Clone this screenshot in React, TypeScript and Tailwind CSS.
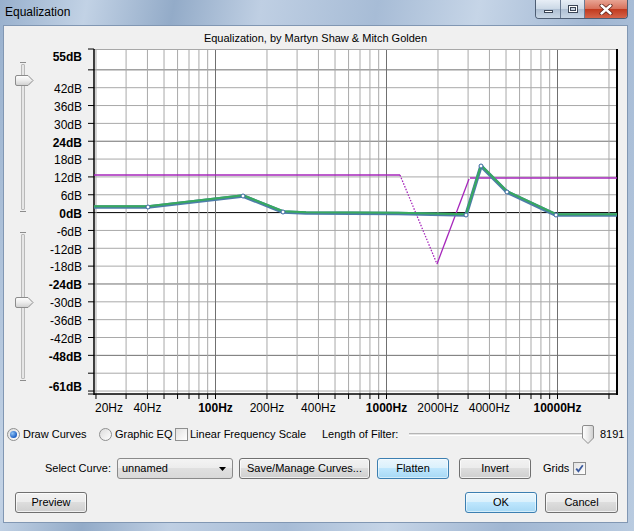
import React from 'react'

const xf = (f: number) => 215.5 + (Math.log10(f) - 2) * 171
const yd = (d: number) => 212.6 - d * 2.974

const freqs = [
  20, 30, 40, 50, 60, 70, 80, 90, 100, 200, 300, 400, 500, 600, 700, 800, 900, 1000, 2000, 3000, 4000, 5000,
  6000, 7000, 8000, 9000, 10000, 20000,
]
const majorF = [100, 1000, 10000]
const dbs = [48, 42, 36, 30, 24, 18, 12, 6, 0, -6, -12, -18, -24, -30, -36, -42, -48, -54, -60]
const majorDb = [48, 24, -24, -48]

const dbLabels = [
  { t: '55dB', y: 57, b: true },
  ...[42, 36, 30, 24, 18, 12, 6, 0, -6, -12, -18, -24, -30, -36, -42, -48].map((d) => ({
    t: `${d}dB`,
    y: yd(d) + 1,
    b: d % 24 === 0,
  })),
  { t: '-61dB', y: 387, b: true },
]

const hzLabels = [
  { t: '20Hz', x: 95, anchor: 'start', b: false },
  { t: '40Hz', x: xf(40), anchor: 'middle', b: false },
  { t: '100Hz', x: xf(100), anchor: 'middle', b: true },
  { t: '200Hz', x: xf(200), anchor: 'middle', b: false },
  { t: '400Hz', x: xf(400), anchor: 'middle', b: false },
  { t: '1000Hz', x: xf(1000), anchor: 'middle', b: true },
  { t: '2000Hz', x: xf(2000), anchor: 'middle', b: false },
  { t: '4000Hz', x: xf(4000), anchor: 'middle', b: false },
  { t: '10000Hz', x: xf(10000), anchor: 'middle', b: true },
]

const curve = [
  [94, 207],
  [148, 207],
  [243, 196],
  [283, 212],
  [306, 213],
  [398, 213.5],
  [466, 215],
  [481, 166],
  [507, 192],
  [556, 215],
  [617, 215],
]
const knots = [
  [148, 207],
  [243, 196],
  [283, 212],
  [466, 215],
  [481, 166],
  [507, 192],
  [556, 215],
]
const pts = curve.map((p) => p.join(',')).join(' ')
const ptsUp = curve.map((p) => `${p[0]},${p[1] - 0.8}`).join(' ')

function Chart() {
  return (
    <svg width={587} height={375} viewBox="40 45 587 375" className="block shrink-0">
      <rect x={94} y={49} width={523} height={345} fill="#ffffff" />
      {dbs.map((d) => (
        <line
          key={'h' + d}
          x1={94}
          x2={617}
          y1={yd(d)}
          y2={yd(d)}
          stroke={d === 0 ? '#000000' : majorDb.includes(d) ? '#707070' : '#a9a9a9'}
          strokeWidth={1}
        />
      ))}
      {freqs.map((f) => (
        <line
          key={'v' + f}
          x1={xf(f)}
          x2={xf(f)}
          y1={49}
          y2={394}
          stroke={majorF.includes(f) ? '#707070' : '#a9a9a9'}
          strokeWidth={1}
        />
      ))}
      <line x1={94} x2={617} y1={49.5} y2={49.5} stroke="#a8a8a8" />
      <line x1={94} x2={94} y1={49} y2={395} stroke="#000" strokeWidth={1.5} />
      <line x1={617} x2={617} y1={49} y2={395} stroke="#000" strokeWidth={2} />
      <line x1={94} x2={618} y1={394} y2={394} stroke="#000" strokeWidth={1.5} />

      {[55, ...dbs, -61].map((d) => (
        <line key={'t' + d} x1={88} x2={94} y1={yd(d)} y2={yd(d)} stroke="#000" />
      ))}
      {freqs.map((f) => (
        <line key={'b' + f} x1={xf(f)} x2={xf(f)} y1={394} y2={399} stroke="#000" />
      ))}

      <g fontFamily='"Liberation Sans", Arial, sans-serif' fontSize={12} fill="#000">
        {dbLabels.map((l) => (
          <text key={l.t} x={82} y={l.y + 4.3} textAnchor="end" fontWeight={l.b ? 700 : 400}>
            {l.t}
          </text>
        ))}
        {hzLabels.map((l) => (
          <text
            key={l.t}
            x={l.x}
            y={411.5}
            textAnchor={l.anchor as 'start' | 'middle'}
            fontWeight={l.b ? 700 : 400}
          >
            {l.t}
          </text>
        ))}
      </g>

      <g stroke="#a626bb" strokeWidth={1.3} fill="none">
        <polyline points="94,175 400,175" />
        <polyline points="400,175 437,264" strokeDasharray="1.5 1.5" />
        <polyline points="437,264 469,179" />
        <polyline points="470,178 617,178" />
      </g>

      <polyline points={pts} fill="none" stroke="#4d7da9" strokeWidth={3.6} strokeLinejoin="round" />
      <polyline points={ptsUp} fill="none" stroke="#38aa5e" strokeWidth={2} strokeLinejoin="round" />
      {knots.map((k) => (
        <circle key={k.join('-')} cx={k[0]} cy={k[1]} r={2} fill="#ffffff" stroke="#3a68a0" strokeWidth={1} />
      ))}
    </svg>
  )
}

function VThumb() {
  return (
    <svg width={19} height={11} viewBox="0 0 19 11" className="block">
      <defs>
        <linearGradient id="vth" x1="0" y1="0" x2="0" y2="1">
          <stop offset="0" stopColor="#ffffff" />
          <stop offset="0.5" stopColor="#ececec" />
          <stop offset="1" stopColor="#cfcfcf" />
        </linearGradient>
      </defs>
      <path d="M2 0.5 H13 L18 5.5 L13 10.5 H2 A1.5 1.5 0 0 1 0.5 9 V2 A1.5 1.5 0 0 1 2 0.5 Z" fill="url(#vth)" stroke="#8c8c8c" />
    </svg>
  )
}

function VSlider({ h, thumbTop }: { h: number; thumbTop: number }) {
  return (
    <div className="relative w-[36px]" style={{ height: h }}>
      <div className="absolute left-[17px] top-0 h-full w-[4px] rounded-[1px] border border-[#b9b9b9] bg-[#e6e6e6]" />
      <div className="absolute left-[16px] top-[-2px] h-[1px] w-[6px] bg-[#8c8c8c]" />
      <div className="absolute left-[16px] bottom-[-2px] h-[1px] w-[6px] bg-[#8c8c8c]" />
      <div className="absolute left-[11px]" style={{ top: thumbTop }}>
        <VThumb />
      </div>
    </div>
  )
}

function Radio({ checked }: { checked?: boolean }) {
  return (
    <span className="flex h-[13px] w-[13px] shrink-0 items-center justify-center rounded-full border border-[#8e8f8f] bg-[linear-gradient(135deg,#dcdcdc,#ffffff)]">
      {checked && (
        <span className="h-[7px] w-[7px] rounded-full bg-[radial-gradient(circle_at_35%_35%,#8fc3f5,#1d5fc4_70%)]" />
      )}
    </span>
  )
}

function Check({ checked }: { checked?: boolean }) {
  return (
    <span className="flex h-[13px] w-[13px] shrink-0 items-center justify-center border border-[#8e8f8f] bg-[linear-gradient(135deg,#e2e2e2,#ffffff)]">
      {checked && (
        <svg width={11} height={11} viewBox="0 0 11 11">
          <path d="M2.2 5.6 L4.4 8.2 L8.8 2.2" fill="none" stroke="#3b5a9e" strokeWidth={1.8} />
        </svg>
      )}
    </span>
  )
}

function Btn({ label, w, active }: { label: string; w: number; active?: boolean }) {
  return (
    <div
      className={
        active
          ? 'flex h-[21px] items-center justify-center rounded-[3px] border border-[#3c7fb1] bg-[linear-gradient(#eaf6fd_0%,#d9f0fc_50%,#bee6fd_50%,#a7d9f5_100%)] shadow-[inset_0_0_0_1px_#ffffff80]'
          : 'flex h-[21px] items-center justify-center rounded-[3px] border border-[#707070] bg-[linear-gradient(#f2f2f2_0%,#ebebeb_50%,#dddddd_50%,#cfcfcf_100%)] shadow-[inset_0_0_0_1px_#ffffffb0]'
      }
      style={{ width: w }}
    >
      {label}
    </div>
  )
}

export default function App() {
  return (
    <div
      className="flex h-[531px] w-[634px] flex-col bg-[linear-gradient(100deg,#98b0cd_0%,#c2d2e5_12%,#93abc8_24%,#bfcfe3_36%,#a7bcd6_52%,#c6d5e7_66%,#a0b6d2_82%,#b9cbe0_100%)] text-[11px] text-black"
      style={{ fontFamily: '"Liberation Sans", Arial, sans-serif' }}
    >
      <div className="flex h-[25px] shrink-0 items-start justify-between">
        <span className="ml-[5px] mt-[5px] text-[12px] leading-[15px]">Equalization</span>
        <div className="mr-[6px] flex h-[19px] overflow-hidden rounded-b-[4px] border border-t-0 border-[#4d5d73]">
          <div className="flex w-[25px] items-center justify-center border-r border-[#6a7b93] bg-[linear-gradient(#e7eef6_0%,#cbd8e6_50%,#aebfd3_50%,#c8d6e5_100%)]">
            <span className="mt-[5px] h-[3px] w-[9px] border border-[#3b4657] bg-white" />
          </div>
          <div className="flex w-[24px] items-center justify-center border-r border-[#6a7b93] bg-[linear-gradient(#e7eef6_0%,#cbd8e6_50%,#aebfd3_50%,#c8d6e5_100%)]">
            <span className="flex h-[8px] w-[10px] items-center justify-center border border-[#3b4657] bg-white">
              <span className="h-[4px] w-[6px] border border-[#3b4657] bg-[#c9d5e3]" />
            </span>
          </div>
          <div className="flex w-[42px] items-center justify-center bg-[linear-gradient(#e8a493_0%,#d7705a_50%,#c0391d_50%,#d5644a_100%)]">
            <svg width={14} height={11} viewBox="0 0 14 11">
              <path d="M2.5 1.5 L11.5 9.5 M11.5 1.5 L2.5 9.5" stroke="#5a1e14" strokeWidth={4} strokeLinecap="round" />
              <path d="M2.5 1.5 L11.5 9.5 M11.5 1.5 L2.5 9.5" stroke="#ffffff" strokeWidth={2.4} strokeLinecap="round" />
            </svg>
          </div>
        </div>
      </div>

      <div className="ml-[3px] flex h-[498px] w-[625px] flex-col border border-[#8197b3] bg-[#f0f0f0]">
        <div className="flex h-[19px] shrink-0 justify-center pt-[6px] leading-[13px]">
          Equalization, by Martyn Shaw &amp; Mitch Golden
        </div>

        <div className="flex h-[375px] shrink-0">
          <div className="flex w-[36px] shrink-0 flex-col pt-[19px]">
            <VSlider h={146} thumbTop={11} />
            <div className="mt-[24px]">
              <VSlider h={145} thumbTop={63} />
            </div>
          </div>
          <Chart />
        </div>

        <div className="mt-[4px] flex h-[20px] shrink-0 items-center">
          <div className="ml-[3px] flex w-[92px] items-center gap-[3px]">
            <Radio checked />
            <span>Draw Curves</span>
          </div>
          <div className="flex w-[76px] items-center gap-[3px]">
            <Radio />
            <span>Graphic EQ</span>
          </div>
          <div className="flex w-[147px] items-center gap-[2px]">
            <Check />
            <span>Linear Frequency Scale</span>
          </div>
          <span className="w-[87px]">Length of Filter:</span>
          <div className="relative h-[20px] w-[184px]">
            <div className="absolute left-0 top-[9px] h-[3px] w-[180px] border-t border-[#b5b5b5] border-b border-b-white bg-[#e3e3e3]" />
            <svg width={12} height={19} viewBox="0 0 12 19" className="absolute left-[173px] top-[1px]">
              <defs>
                <linearGradient id="hth" x1="0" y1="0" x2="1" y2="0">
                  <stop offset="0" stopColor="#ffffff" />
                  <stop offset="0.5" stopColor="#ececec" />
                  <stop offset="1" stopColor="#cdcdcd" />
                </linearGradient>
              </defs>
              <path d="M0.5 2 A1.5 1.5 0 0 1 2 0.5 H10 A1.5 1.5 0 0 1 11.5 2 V13 L6 18.5 L0.5 13 Z" fill="url(#hth)" stroke="#8c8c8c" />
            </svg>
          </div>
          <span className="ml-[7px]">8191</span>
        </div>

        <div className="mt-[14px] flex h-[21px] shrink-0 items-center">
          <span className="w-[113px] pr-[6px] text-right">Select Curve:</span>
          <div className="flex h-[21px] w-[116px] items-center justify-between rounded-[3px] border border-[#8a8a8a] bg-[linear-gradient(#f4f4f4_0%,#ececec_50%,#e0e0e0_50%,#d9d9d9_100%)] pl-[4px] pr-[6px]">
            <span>unnamed</span>
            <svg width={7} height={4} viewBox="0 0 7 4">
              <path d="M0 0 H7 L3.5 4 Z" fill="#000" />
            </svg>
          </div>
          <div className="ml-[6px]">
            <Btn label="Save/Manage Curves..." w={131} />
          </div>
          <div className="ml-[7px]">
            <Btn label="Flatten" w={72} active />
          </div>
          <div className="ml-[10px]">
            <Btn label="Invert" w={72} />
          </div>
          <span className="ml-[12px]">Grids</span>
          <span className="ml-[4px]">
            <Check checked />
          </span>
        </div>

        <div className="mt-[13px] flex h-[21px] shrink-0 items-center justify-between pl-[11px] pr-[9px]">
          <Btn label="Preview" w={72} />
          <div className="flex gap-[8px]">
            <Btn label="OK" w={72} active />
            <Btn label="Cancel" w={73} />
          </div>
        </div>
      </div>
    </div>
  )
}
